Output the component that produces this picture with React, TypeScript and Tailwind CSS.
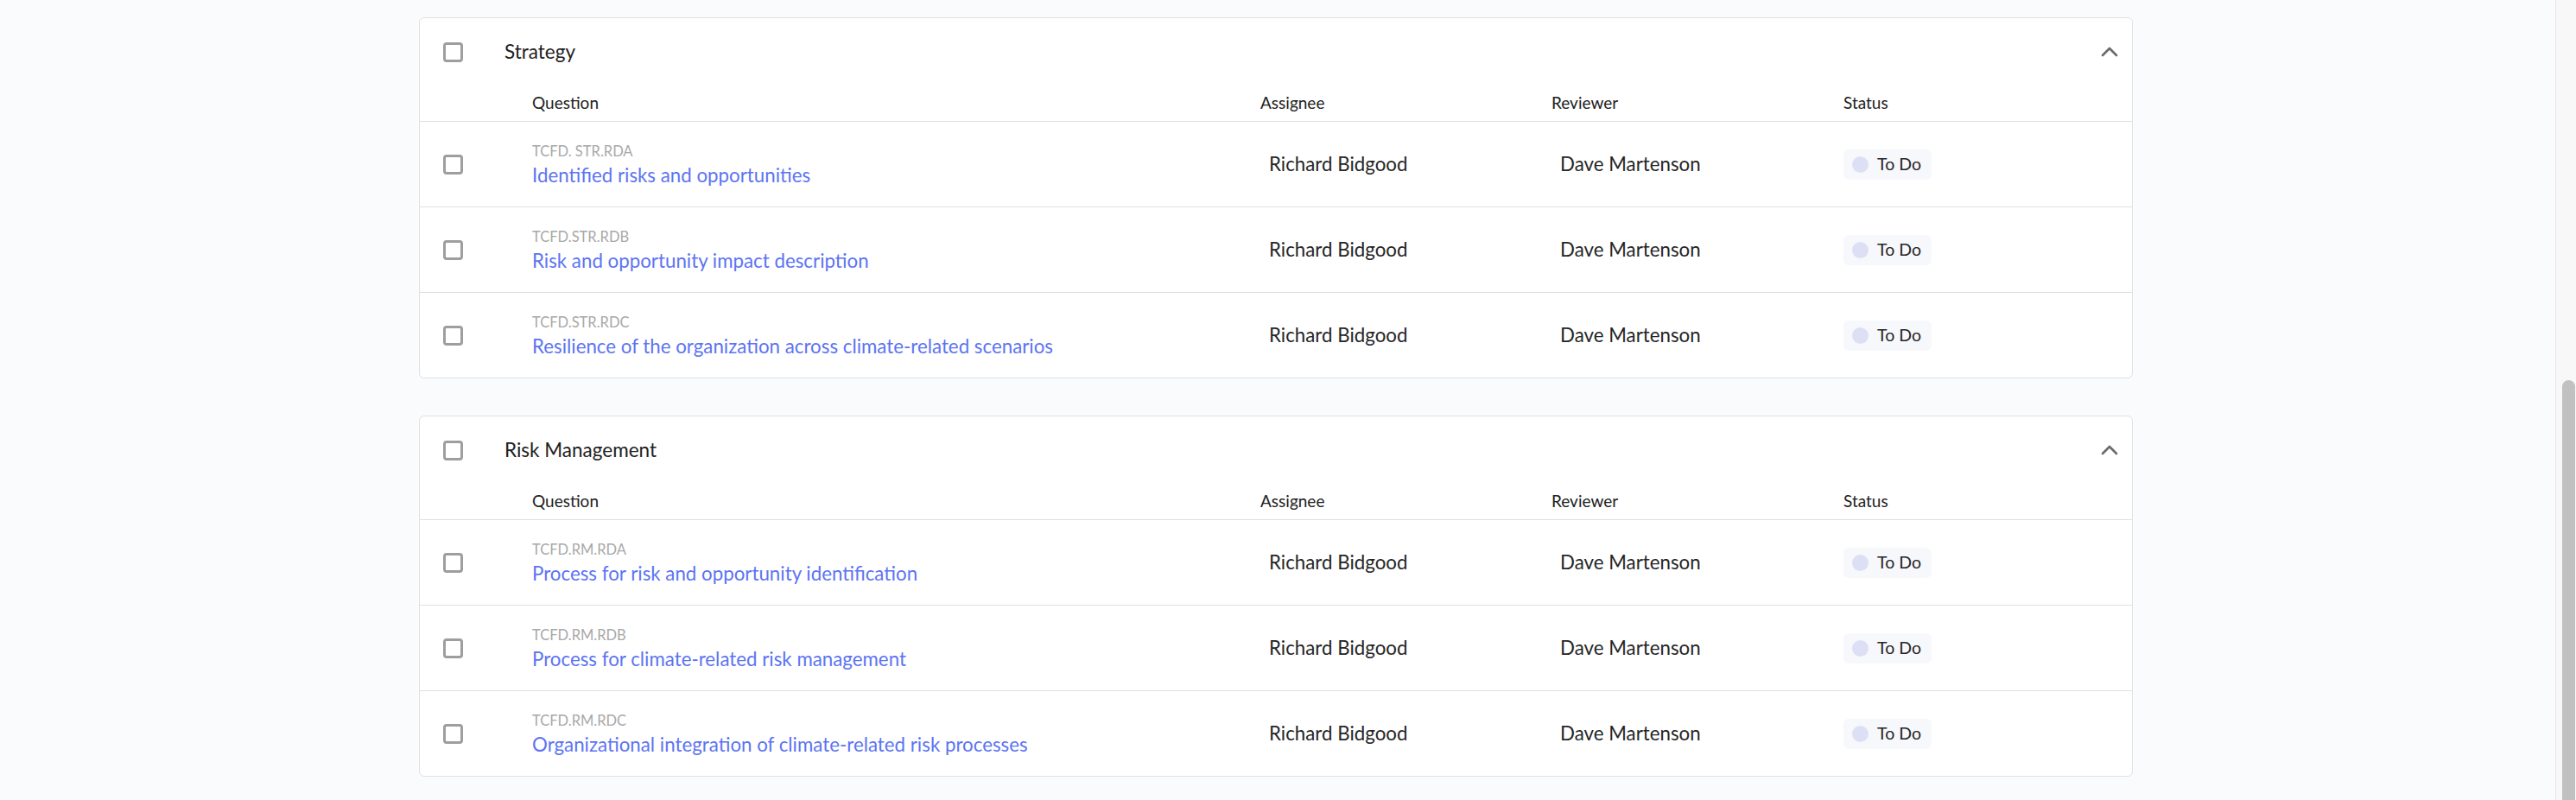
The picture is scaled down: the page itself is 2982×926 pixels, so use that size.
import { ChevronUp } from 'lucide-react';

interface Question {
    code: string;
    title: string;
    assignee: string;
    reviewer: string;
    status: string;
}

interface Section {
    name: string;
    questions: Question[];
}

const sections: Section[] = [
    {
        name: 'Strategy',
        questions: [
            { code: 'TCFD. STR.RDA', title: 'Identified risks and opportunities', assignee: 'Richard Bidgood', reviewer: 'Dave Martenson', status: 'To Do' },
            { code: 'TCFD.STR.RDB', title: 'Risk and opportunity impact description', assignee: 'Richard Bidgood', reviewer: 'Dave Martenson', status: 'To Do' },
            { code: 'TCFD.STR.RDC', title: 'Resilience of the organization across climate-related scenarios', assignee: 'Richard Bidgood', reviewer: 'Dave Martenson', status: 'To Do' },
        ],
    },
    {
        name: 'Risk Management',
        questions: [
            { code: 'TCFD.RM.RDA', title: 'Process for risk and opportunity identification', assignee: 'Richard Bidgood', reviewer: 'Dave Martenson', status: 'To Do' },
            { code: 'TCFD.RM.RDB', title: 'Process for climate-related risk management', assignee: 'Richard Bidgood', reviewer: 'Dave Martenson', status: 'To Do' },
            { code: 'TCFD.RM.RDC', title: 'Organizational integration of climate-related risk processes', assignee: 'Richard Bidgood', reviewer: 'Dave Martenson', status: 'To Do' },
        ],
    },
];

function cn(...parts: (string | false | undefined)[]) {
    return parts.filter(Boolean).join(' ');
}

const Checkbox = () => (
    <div className="w-[23px] h-[23px] rounded-[4px] border-[3px] border-[#9e9e9e] bg-white shrink-0" />
);

// column template shared by header and rows
const cols = 'grid grid-cols-[130px_843px_337px_338px_1fr]';

const SectionCard = ({ section }: { section: Section }) => (
    <div className="bg-white border border-[#e0e0e0] rounded-[6px]">
        <div className="h-[78px] flex items-center pl-[27px] pr-[10px]">
            <Checkbox />
            <span className="ml-[48px] text-[22.5px] text-[#212121] flex-1">{section.name}</span>
            <ChevronUp className="w-[32px] h-[32px] text-[#6b6b6b]" strokeWidth={2} />
        </div>
        <div className={cn(cols, 'h-[42px] items-center text-[19px] text-[#212121] border-b border-[#e0e0e0]')}>
            <div />
            <div>Question</div>
            <div>Assignee</div>
            <div>Reviewer</div>
            <div>Status</div>
        </div>
        {section.questions.map((q, i) => {
            const last = i === section.questions.length - 1;
            return (
                <div
                    key={q.code}
                    className={cn(cols, 'items-center', last ? 'h-[98px]' : 'h-[99px] border-b border-[#e0e0e0]')}
                >
                    <div className="pl-[27px]">
                        <Checkbox />
                    </div>
                    <div className="flex flex-col gap-[3px] pt-[1px]">
                        <span className="text-[16.5px] leading-[22px] text-[#a8a8a8]">{q.code}</span>
                        <a className="text-[22.3px] leading-[28px] text-[#5c74f2] cursor-pointer">{q.title}</a>
                    </div>
                    <div className="pl-[10px] text-[22.3px] text-[#262626]">{q.assignee}</div>
                    <div className="pl-[10px] text-[22.3px] text-[#262626]">{q.reviewer}</div>
                    <div>
                        <span className="inline-flex items-center gap-[10px] h-[35px] pl-[10px] pr-[12px] rounded-[6px] bg-[#f7f8fc] text-[19.5px] text-[#262626]">
                            <span className="w-[19px] h-[19px] rounded-full bg-[#dde0f5]" />
                            {q.status}
                        </span>
                    </div>
                </div>
            );
        })}
    </div>
);

export default function App() {
    return (
        <div className="flex h-[926px] w-full bg-[#fafbfd] overflow-hidden" style={{ fontFamily: 'Lato, "Open Sans", sans-serif' }}>
            <main className="flex-1 pt-[20px]">
                <div className="w-[1984px] ml-[485px] flex flex-col gap-[43px]">
                    {sections.map((s) => (
                        <SectionCard key={s.name} section={s} />
                    ))}
                </div>
            </main>
            {/* fake scrollbar */}
            <div className="w-[24px] shrink-0 border-l border-[#e6e6e6] bg-[#f8f8f8] flex flex-col pt-[440px] pl-[7px] pr-[1px]">
                <div className="flex-1 bg-[#c1c1c1] rounded-t-full" />
            </div>
        </div>
    );
}
